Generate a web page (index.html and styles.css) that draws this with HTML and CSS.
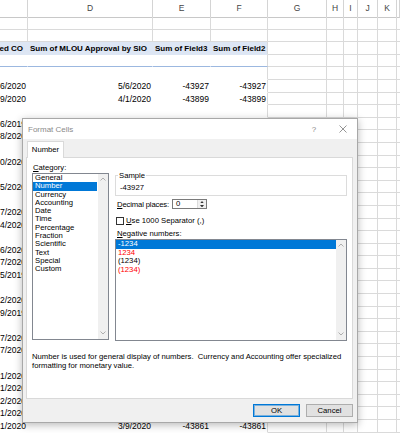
FILE: index.html
```html
<!DOCTYPE html>
<html>
<head>
<meta charset="utf-8">
<link rel="stylesheet" href="styles.css">
</head>
<body>
<div class="sheet">
  <div class="hdr"><span></span><span>D</span><span>E</span><span>F</span><span>G</span><span>H</span><span>I</span><span>J</span><span>K</span><span></span></div>
  <div class="r"><span></span><span></span><span></span><span></span><span></span><span></span><span></span><span></span><span></span><span></span></div>
  <div class="r"><span></span><span></span><span></span><span></span><span></span><span></span><span></span><span></span><span></span><span></span></div>
  <div class="r p ph"><span class="cc">ed CO</span><span>Sum of MLOU Approval by SIO</span><span>Sum of Field3</span><span>Sum of Field2</span><span></span><span></span><span></span><span></span><span></span><span></span></div>
  <div class="r p pb"><span></span><span></span><span></span><span></span><span></span><span></span><span></span><span></span><span></span><span></span></div>
  <div class="r p"><span></span><span></span><span></span><span></span><span></span><span></span><span></span><span></span><span></span><span></span></div>
  <div class="r p"><span class="cc">6/2020</span><span class="num">5/6/2020</span><span class="num">-43927</span><span class="num">-43927</span><span></span><span></span><span></span><span></span><span></span><span></span></div>
  <div class="r p"><span class="cc">9/2020</span><span class="num">4/1/2020</span><span class="num">-43899</span><span class="num">-43899</span><span></span><span></span><span></span><span></span><span></span><span></span></div>
  <div class="r p"><span></span><span></span><span></span><span></span><span></span><span></span><span></span><span></span><span></span><span></span></div>
  <div class="r p"><span class="cc">6/2019</span><span></span><span></span><span></span><span></span><span></span><span></span><span></span><span></span><span></span></div>
  <div class="r p"><span class="cc">8/2020</span><span></span><span></span><span></span><span></span><span></span><span></span><span></span><span></span><span></span></div>
  <div class="r p"><span></span><span></span><span></span><span></span><span></span><span></span><span></span><span></span><span></span><span></span></div>
  <div class="r p"><span class="cc">0/2020</span><span></span><span></span><span></span><span></span><span></span><span></span><span></span><span></span><span></span></div>
  <div class="r p"><span></span><span></span><span></span><span></span><span></span><span></span><span></span><span></span><span></span><span></span></div>
  <div class="r p"><span class="cc">5/2020</span><span></span><span></span><span></span><span></span><span></span><span></span><span></span><span></span><span></span></div>
  <div class="r p"><span></span><span></span><span></span><span></span><span></span><span></span><span></span><span></span><span></span><span></span></div>
  <div class="r p"><span class="cc">7/2020</span><span></span><span></span><span></span><span></span><span></span><span></span><span></span><span></span><span></span></div>
  <div class="r p"><span class="cc">4/2020</span><span></span><span></span><span></span><span></span><span></span><span></span><span></span><span></span><span></span></div>
  <div class="r p"><span></span><span></span><span></span><span></span><span></span><span></span><span></span><span></span><span></span><span></span></div>
  <div class="r p"><span class="cc">6/2020</span><span></span><span></span><span></span><span></span><span></span><span></span><span></span><span></span><span></span></div>
  <div class="r p"><span class="cc">7/2020</span><span></span><span></span><span></span><span></span><span></span><span></span><span></span><span></span><span></span></div>
  <div class="r p"><span class="cc">5/2019</span><span></span><span></span><span></span><span></span><span></span><span></span><span></span><span></span><span></span></div>
  <div class="r p"><span></span><span></span><span></span><span></span><span></span><span></span><span></span><span></span><span></span><span></span></div>
  <div class="r p"><span class="cc">2/2020</span><span></span><span></span><span></span><span></span><span></span><span></span><span></span><span></span><span></span></div>
  <div class="r p"><span class="cc">9/2019</span><span></span><span></span><span></span><span></span><span></span><span></span><span></span><span></span><span></span></div>
  <div class="r p"><span></span><span></span><span></span><span></span><span></span><span></span><span></span><span></span><span></span><span></span></div>
  <div class="r p"><span class="cc">7/2020</span><span></span><span></span><span></span><span></span><span></span><span></span><span></span><span></span><span></span></div>
  <div class="r p"><span class="cc">7/2020</span><span></span><span></span><span></span><span></span><span></span><span></span><span></span><span></span><span></span></div>
  <div class="r p"><span></span><span></span><span></span><span></span><span></span><span></span><span></span><span></span><span></span><span></span></div>
  <div class="r p"><span class="cc">1/2020</span><span></span><span></span><span></span><span></span><span></span><span></span><span></span><span></span><span></span></div>
  <div class="r p"><span class="cc">1/2020</span><span></span><span></span><span></span><span></span><span></span><span></span><span></span><span></span><span></span></div>
  <div class="r p"><span class="cc">2/2020</span><span></span><span></span><span></span><span></span><span></span><span></span><span></span><span></span><span></span></div>
  <div class="r p"><span class="cc">1/2020</span><span></span><span></span><span></span><span></span><span></span><span></span><span></span><span></span><span></span></div>
  <div class="r p"><span class="cc">1/2020</span><span class="num">3/9/2020</span><span class="num">-43861</span><span class="num">-43861</span><span></span><span></span><span></span><span></span><span></span><span></span></div>
  <div class="r p"><span></span><span></span><span></span><span></span><span></span><span></span><span></span><span></span><span></span><span></span></div>
</div>

<div class="dialog">
  <div class="titlebar">
    <span class="title">Format Cells</span>
    <span class="help">?</span>
    <svg class="close" width="8" height="8" viewBox="0 0 8 8"><path d="M0.5 0.5 L7.5 7.5 M7.5 0.5 L0.5 7.5" stroke="#7a7a7a" stroke-width="0.8" fill="none"/></svg>
  </div>
  <div class="tabs"><div class="tab">Number</div></div>
  <div class="panel">
    <div class="cols">
      <div class="left">
        <div class="lbl cat-lbl"><u>C</u>ategory:</div>
        <div class="listbox cat">
          <ul class="items">
            <li>General</li>
            <li class="sel">Number</li>
            <li>Currency</li>
            <li>Accounting</li>
            <li>Date</li>
            <li>Time</li>
            <li>Percentage</li>
            <li>Fraction</li>
            <li>Scientific</li>
            <li>Text</li>
            <li>Special</li>
            <li>Custom</li>
          </ul>
          <div class="vscroll">
            <svg width="6" height="4" viewBox="0 0 6 4"><polyline points="0.5,3.5 3,1 5.5,3.5" fill="none" stroke="#a6a6a6" stroke-width="0.9"/></svg>
            <svg width="6" height="4" viewBox="0 0 6 4"><polyline points="0.5,0.5 3,3 5.5,0.5" fill="none" stroke="#a6a6a6" stroke-width="0.9"/></svg>
          </div>
        </div>
      </div>
      <div class="right">
        <fieldset class="sample"><legend>Sample</legend><div class="sample-val">-43927</div></fieldset>
        <div class="dec-row">
          <span class="dec-lbl"><u>D</u>ecimal places:</span>
          <div class="spin">
            <span class="spin-val">0</span>
            <div class="spin-btns">
              <svg width="5" height="3" viewBox="0 0 5 3"><polygon points="0,3 2.5,0 5,3" fill="#333"/></svg>
              <svg width="5" height="3" viewBox="0 0 5 3"><polygon points="0,0 2.5,3 5,0" fill="#333"/></svg>
            </div>
          </div>
        </div>
        <div class="chk-row"><span class="chk"></span><span><u>U</u>se 1000 Separator (,)</span></div>
        <div class="lbl neg-lbl"><u>N</u>egative numbers:</div>
        <div class="listbox neg">
          <ul class="items">
            <li class="sel">-1234</li>
            <li class="red">1234</li>
            <li>(1234)</li>
            <li class="red">(1234)</li>
          </ul>
          <div class="vscroll">
            <svg width="6" height="4" viewBox="0 0 6 4"><polyline points="0.5,3.5 3,1 5.5,3.5" fill="none" stroke="#a6a6a6" stroke-width="0.9"/></svg>
            <svg width="6" height="4" viewBox="0 0 6 4"><polyline points="0.5,0.5 3,3 5.5,0.5" fill="none" stroke="#a6a6a6" stroke-width="0.9"/></svg>
          </div>
        </div>
      </div>
    </div>
    <p class="desc">Number is used for general display of numbers.&nbsp; Currency and Accounting offer specialized<br>formatting for monetary value.</p>
  </div>
  <div class="footer">
    <button class="btn ok">OK</button>
    <button class="btn">Cancel</button>
  </div>
</div>
</body>
</html>
```

FILE: styles.css
```css
html, body {
  margin: 0;
  padding: 0;
}
body {
  width: 400px;
  height: 433px;
  overflow: hidden;
  position: relative;
  background: #ffffff;
  font-family: "Liberation Sans", Arial, sans-serif;
  color: #000;
}

/* ---------- spreadsheet ---------- */
.sheet {
  display: flex;
  flex-direction: column;
}
.hdr, .r {
  display: grid;
  grid-template-columns: 28px 125px 58px 57px 59px 17px 14px 20px 19px 3px;
}
.hdr {
  height: 17px;
  background: #ffffff;
}
.hdr > span {
  box-sizing: border-box;
  border-right: 1px solid #d4d4d4;
  border-bottom: 1px solid #c8c8c8;
  font-size: 8.5px;
  line-height: 17px;
  text-align: center;
  color: #444;
}
.r {
  height: 12.6px;
}
.r > span {
  box-sizing: border-box;
  border-right: 1px solid #dadada;
  border-bottom: 1px solid #dadada;
  overflow: hidden;
  white-space: nowrap;
  font-size: 8.5px;
  line-height: 13px;
  padding: 0 2px;
  color: #000;
}
.p > span:nth-child(-n+4) {
  border-bottom-color: transparent;
  border-right-color: transparent;
}
.p > span:nth-child(4) {
  border-right-color: #dadada;
}
.r > .num {
  text-align: right;
  padding-right: 1px;
}
.r > .cc {
  display: flex;
  justify-content: flex-end;
  padding-right: 1px;
}
.ph > span:nth-child(-n+4) {
  background: #dde6f4;
  font-weight: bold;
  font-size: 8px;
}
.ph > .cc {
  padding-left: 0;
  padding-right: 4px;
}
.pb > span:nth-child(-n+4) {
  border-bottom-color: #9cb8e0;
}

/* ---------- dialog ---------- */
.dialog {
  position: absolute;
  left: 22px;
  top: 118px;
  width: 336px;
  height: 305px;
  box-sizing: border-box;
  border: 1px solid #a8a8a8;
  background: #f0f0f0;
  box-shadow: 0 2px 8px rgba(0, 0, 0, 0.28);
  display: flex;
  flex-direction: column;
  font-size: 7.7px;
}
.titlebar {
  height: 20px;
  flex: none;
  background: #ffffff;
  display: flex;
  align-items: center;
  padding-left: 5px;
}
.title {
  flex: 1;
  color: #8a8a8a;
  font-size: 8px;
}
.help {
  color: #8a8a8a;
  font-size: 8px;
  width: 8px;
  text-align: center;
  margin-right: 21px;
}
.close {
  margin-right: 10px;
}
.tabs {
  height: 18px;
  flex: none;
  box-sizing: border-box;
  padding: 2px 0 0 4px;
  display: flex;
  align-items: flex-end;
}
.tab {
  position: relative;
  z-index: 1;
  width: 37px;
  height: 17px;
  box-sizing: border-box;
  margin-bottom: -1px;
  background: #ffffff;
  border: 1px solid #d9d9d9;
  border-bottom: none;
  text-align: center;
  line-height: 16px;
}
.panel {
  height: 242px;
  flex: none;
  box-sizing: border-box;
  margin: 0 4px 0 3px;
  background: #ffffff;
  border: 1px solid #d9d9d9;
  padding: 5px 4px 0 5px;
}
.cols {
  display: grid;
  grid-template-columns: 77px 232px;
  column-gap: 6px;
}
.lbl {
  line-height: 9px;
  white-space: nowrap;
}
.cat-lbl {
  height: 10px;
  padding-left: 1px;
}
.listbox {
  box-sizing: border-box;
  border: 1px solid #828790;
  display: flex;
  background: #fff;
}
.listbox.cat {
  height: 167px;
}
.listbox.neg {
  height: 102px;
}
.items {
  list-style: none;
  margin: 0;
  padding: 0;
  flex: 1;
}
.items li {
  height: 8.3px;
  line-height: 8.3px;
  padding-left: 2px;
  white-space: nowrap;
}
.neg .items li {
  height: 8.6px;
  line-height: 8.6px;
}
.items li.sel {
  background: #0078d7;
  color: #ffffff;
}
.cat .items li.sel {
  margin-right: 1px;
}
.items li.red {
  color: #ff0000;
}
.vscroll {
  width: 10px;
  background: #f0f0f0;
  display: flex;
  flex-direction: column;
  justify-content: space-between;
  align-items: center;
  padding: 3px 0 4px;
  box-sizing: border-box;
}
.right {
  display: flex;
  flex-direction: column;
}
.sample {
  margin: 8px 0 0 0;
  padding: 3px 3px 3px 3px;
  border: 1px solid #dcdcdc;
  min-width: 0;
}
.sample legend {
  padding: 0 1px;
  margin-left: -1px;
  line-height: 9px;
}
.sample-val {
  line-height: 9px;
  padding-left: 1px;
}
.dec-row {
  display: flex;
  align-items: center;
  height: 10px;
  margin-top: 3px;
  padding-left: 2px;
}
.dec-lbl {
  flex: none;
  width: 55px;
  white-space: nowrap;
  letter-spacing: -0.15px;
}
.spin {
  flex: none;
  width: 35px;
  height: 10px;
  box-sizing: border-box;
  border: 1px solid #7a7a7a;
  display: flex;
}
.spin-val {
  flex: 1;
  padding-left: 3px;
  line-height: 8px;
}
.spin-btns {
  width: 8px;
  border-left: 1px solid #dcdcdc;
  background: #f0f0f0;
  display: flex;
  flex-direction: column;
  justify-content: space-around;
  align-items: center;
}
.spin-btns svg {
  width: 4px;
  height: 2.5px;
}
.chk-row {
  display: flex;
  align-items: center;
  gap: 2px;
  height: 9px;
  margin-top: 7px;
  padding-left: 1px;
  white-space: nowrap;
}
.chk {
  flex: none;
  width: 8px;
  height: 8px;
  box-sizing: border-box;
  border: 1px solid #333;
  background: #fff;
}
.neg-lbl {
  margin-top: 4px;
  height: 10px;
  padding-left: 2px;
}
.desc {
  margin: 11px 0 0 0;
  line-height: 9px;
  white-space: nowrap;
}

.footer {
  flex: 1;
  display: flex;
  justify-content: flex-end;
  align-items: center;
  gap: 6px;
  padding-right: 4px;
}
.btn {
  font-family: "Liberation Sans", Arial, sans-serif;
  font-size: 7.7px;
  width: 47px;
  height: 13px;
  padding: 0;
  box-sizing: border-box;
  background: #e1e1e1;
  border: 1px solid #adadad;
  color: #000;
}
.btn.ok {
  border-color: #0078d7;
  box-shadow: inset 0 0 0 1px rgba(0, 120, 215, 0.45);
}
```
